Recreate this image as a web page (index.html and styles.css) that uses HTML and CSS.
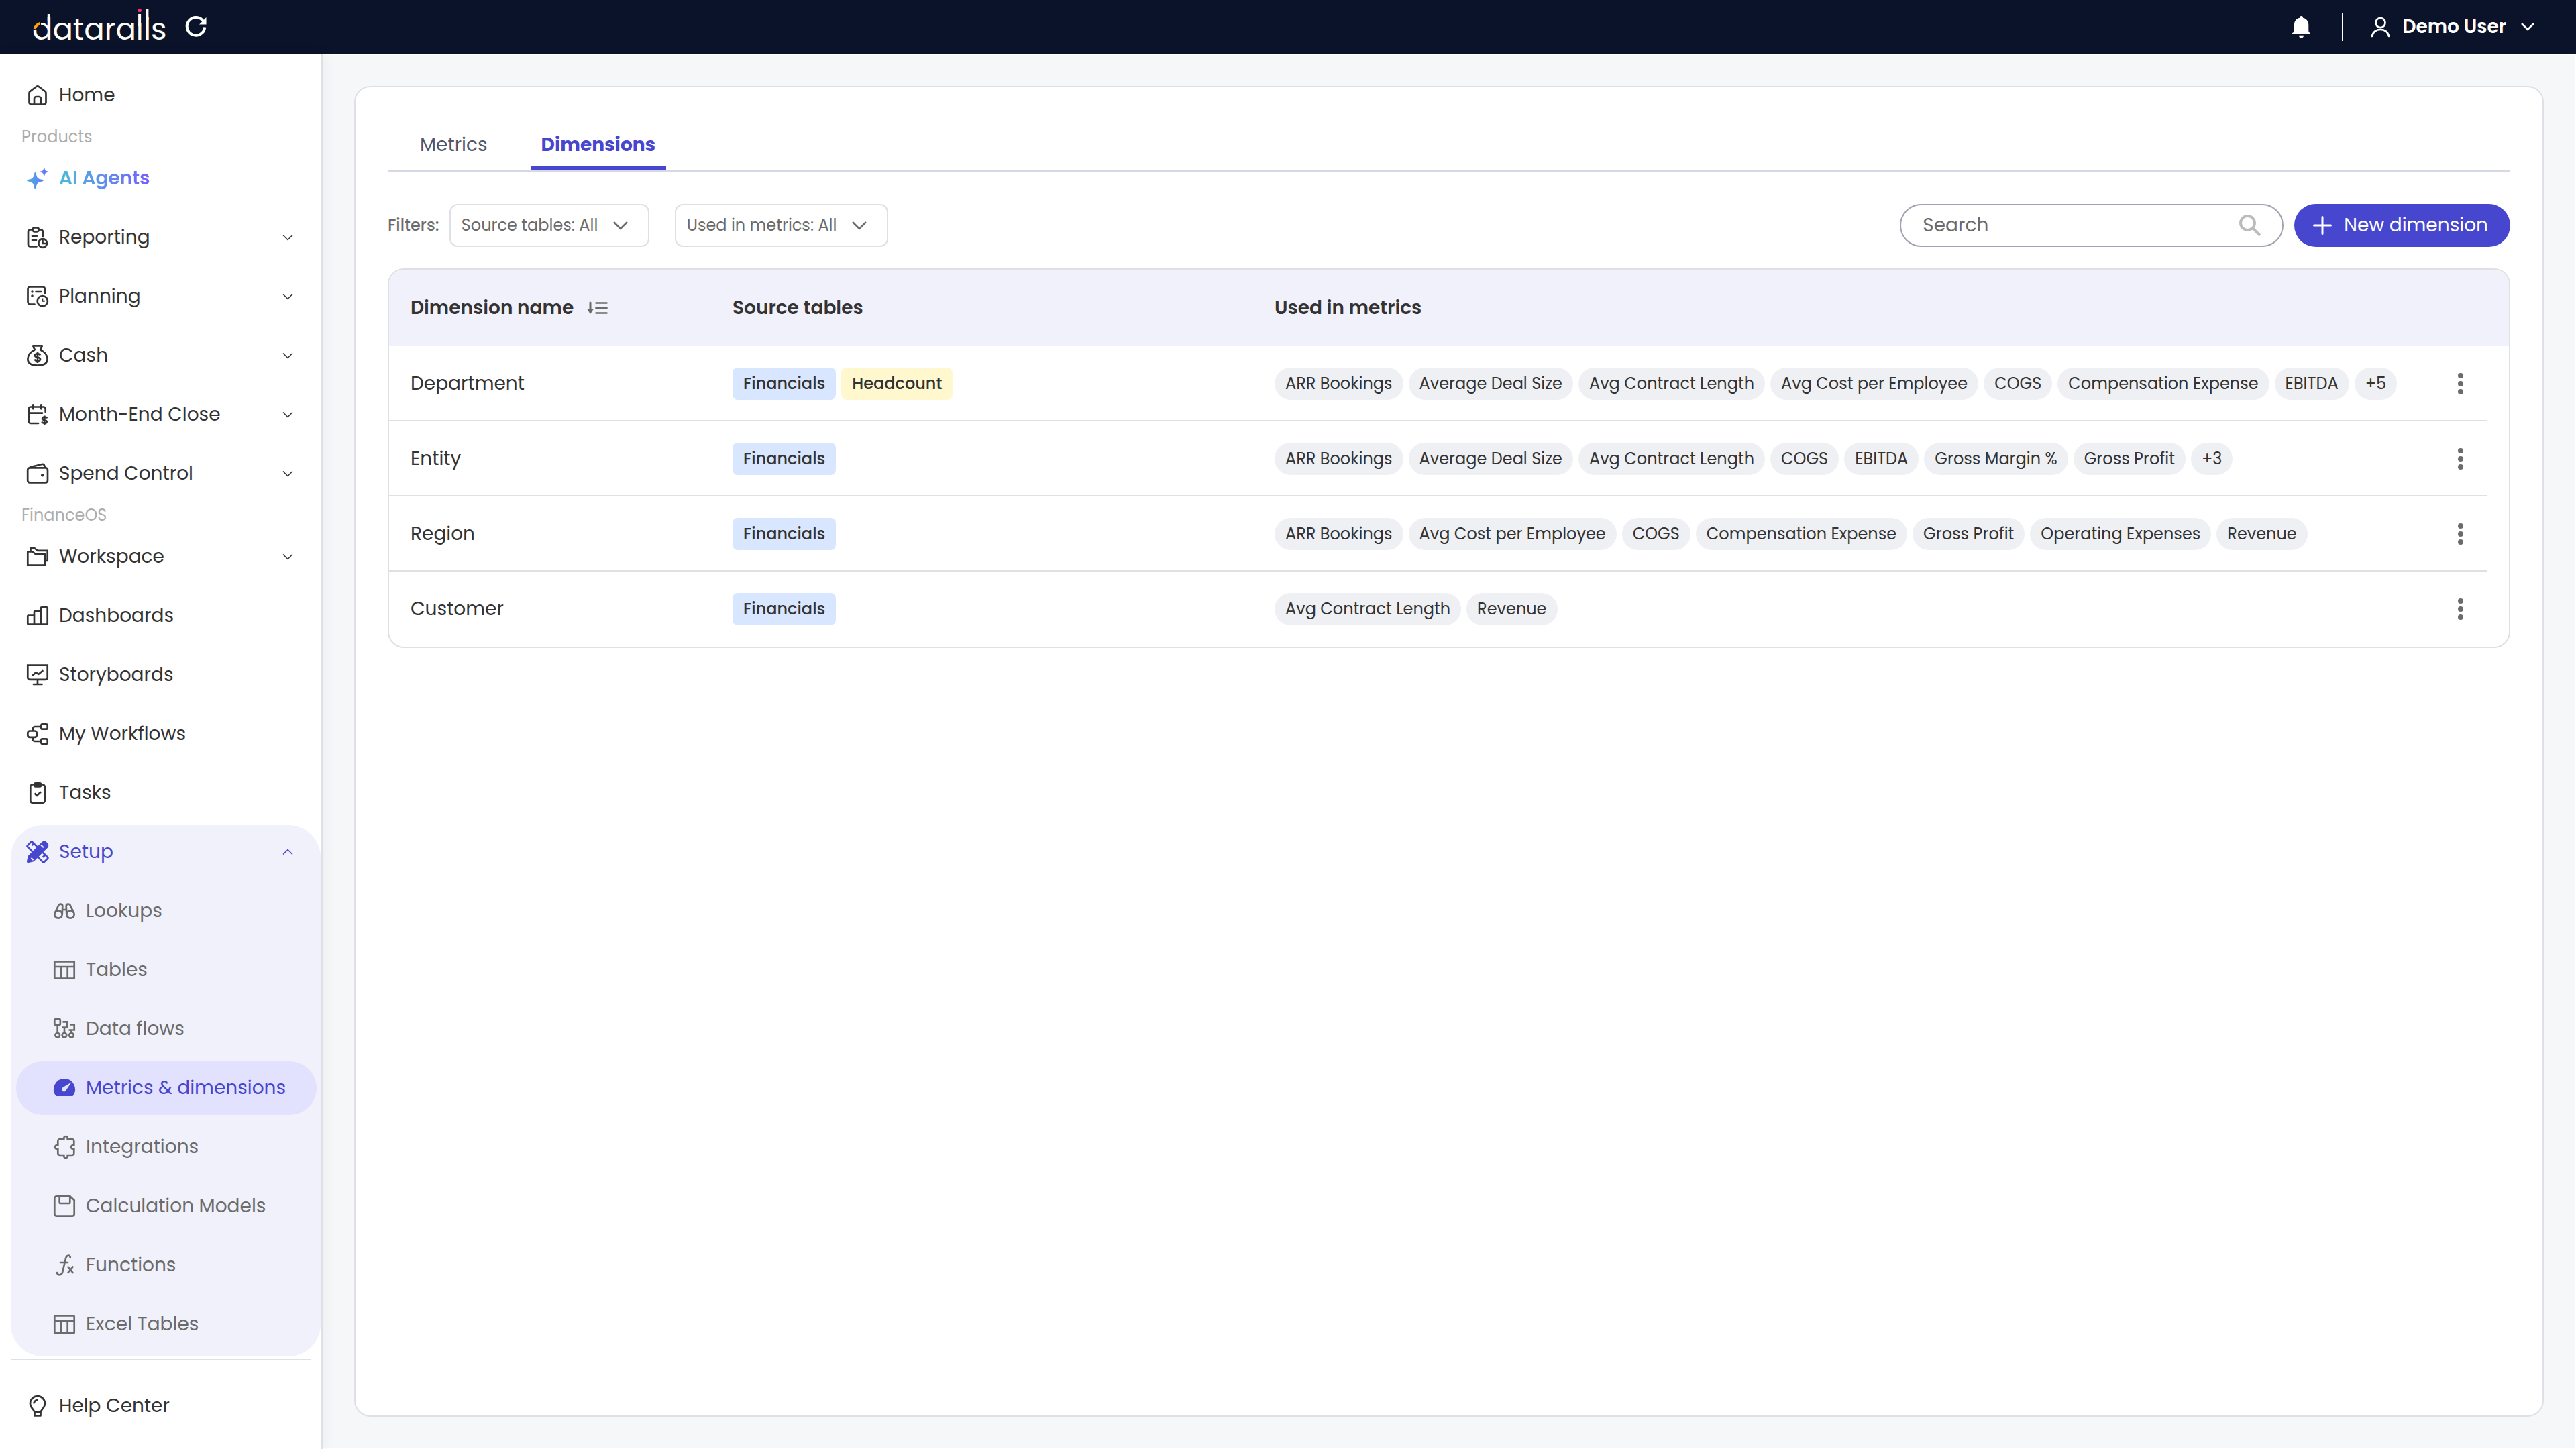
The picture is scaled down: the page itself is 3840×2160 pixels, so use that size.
FILE: index.html
```html
<!DOCTYPE html>
<html lang="en">

<head>
    <meta charset="UTF-8">
    <meta name="viewport" content="width=device-width, initial-scale=1.0">
    <title>Datarails - Metrics &amp; dimensions</title>
    <link rel="stylesheet" href="styles.css">
</head>

<body>
    <header class="topbar">
        <a class="logo" href="#" aria-label="datarails">
            <svg width="204" height="68" viewBox="0 -4 204 68">
                <text class="logo-text" x="0" y="49">datarails</text>
                <!-- orange start of the d, tall stems, pink dot -->
                <circle class="logo-gap" cx="6.500" cy="28" r="7" />
                <path class="logo-arc" d="M3.600 33a12 12 0 0 1 8-8" />
                <path class="logo-gap" d="M155 10h9.500v13H155z" />
                <path class="logo-stem" d="M24.800 11v10M160.100 11v18M171.400 4v16" />
                <circle class="logo-dot" cx="160.100" cy="5.500" r="2.800" />
            </svg>
        </a>
        <button class="icon-btn" aria-label="Refresh">
            <svg class="icon" viewBox="0 0 32 32"><path d="M27.500 8.500A13.300 13.300 0 1 0 29.300 16.500" stroke-width="4" /><path class="fill" d="M31.500 2v10.500H21z" /></svg>
        </button>
        <div class="topbar-right">
            <button class="icon-btn" aria-label="Notifications">
                <svg class="icon" viewBox="0 0 32 32"><path class="fill" d="M15.500 0a2.500 2.500 0 0 1 2.500 2.700c5 1 8.300 5 8.300 10V21c0 2 .5 3 2.400 4.300V27H2v-1.700C4.300 24 5 23 5 21v-8.300c0-5 3-9 8-10A2.500 2.500 0 0 1 15.500 0zM12 28.700h7a3.500 3.500 0 0 1-7 0z" /></svg>
            </button>
            <span class="divider"></span>
            <button class="user-btn">
                <svg class="icon" viewBox="0 0 32 32"><circle cx="15.500" cy="10" r="7" /><path d="M3 30c2-13.500 23-13.500 25 0" stroke-linecap="round" /></svg>
                Demo User
                <svg class="user-chevron" width="24" height="16" viewBox="0 0 24 16"><path d="M3 3l9 9 9-9" /></svg>
            </button>
        </div>
    </header>

    <div class="layout">
        <nav class="sidebar">
            <a class="nav-item" href="#">
                <svg class="icon" viewBox="0 0 32 32"><path d="M3.500 12.600c0-.9.4-1.700 1.100-2.300L14.200 3a3 3 0 0 1 3.600 0l9.600 7.300c.7.6 1.100 1.400 1.100 2.300V26.500a3 3 0 0 1-3 3h-19a3 3 0 0 1-3-3zM11 29v-8a3 3 0 0 1 3-3h4a3 3 0 0 1 3 3v8" /></svg>
                Home
            </a>
            <h2 class="nav-label">Products</h2>
            <a class="nav-item" href="#">
                <svg class="icon" viewBox="0 0 32 32">
                    <defs>
                        <linearGradient id="ai" gradientUnits="userSpaceOnUse" x1="0" y1="0" x2="32" y2="0">
                            <stop offset="0" stop-color="#50acdf" />
                            <stop offset="1" stop-color="#6772fa" />
                        </linearGradient>
                    </defs>
                    <path class="spark" d="M12.400 6.700q1 0 1.600 3.300c1 5 2.500 6.600 7.400 7.600q3.300.6 3.300 1.600t-3.300 1.600c-4.900 1-6.400 2.600-7.400 7.600q-.6 3.300-1.600 3.300t-1.600-3.300c-1-5-2.500-6.600-7.400-7.600q-3.300-.6-3.300-1.600t3.300-1.600c4.900-1 6.400-2.600 7.400-7.600q.6-3.300 1.600-3.300z" />
                    <path class="spark" d="M25.800 0q.6 0 .9 1.700c.5 2.300 1.300 3.100 3.600 3.600q1.700.3 1.700.9t-1.700.9c-2.300.5-3.100 1.300-3.600 3.600q-.3 1.700-.9 1.700t-.9-1.700c-.5-2.300-1.300-3.100-3.600-3.600q-1.700-.3-1.700-.9t1.700-.9c2.300-.5 3.100-1.300 3.600-3.600q.3-1.700.9-1.700z" />
                </svg>
                <span class="ai-text">AI Agents</span>
            </a>
            <a class="nav-item" href="#">
                <svg class="icon" viewBox="0 0 32 32"><path d="M8 4.500H5a3 3 0 0 0-3 3v19a3 3 0 0 0 3 3h9.500M18.500 4.500H21a3 3 0 0 1 3 3V14M8 13.700h7M8 20h6" stroke-linecap="round" /><rect x="8.500" y="1.300" width="9.500" height="6" rx="3" /><circle cx="23.700" cy="24.500" r="6.300" /><path d="M23.500 19v6h6" /></svg>
                Reporting
                <svg class="chevron" viewBox="0 0 16 10"><path d="M1 1.500l7 7 7-7" /></svg>
            </a>
            <a class="nav-item" href="#">
                <svg class="icon" viewBox="0 0 32 32"><path d="M27 11.500V5a3.500 3.500 0 0 0-3.500-3.500H5A3.500 3.500 0 0 0 1.500 5v19A3.500 3.500 0 0 0 5 27.500h6.500M13.500 9H21" stroke-linecap="round" /><circle class="fill" cx="8" cy="9" r="1.800" /><circle class="fill" cx="8" cy="15" r="1.800" /><circle cx="23.300" cy="22.700" r="7.700" /><path d="M23.300 18.500v4.300h3.500" stroke-width="2" /></svg>
                Planning
                <svg class="chevron" viewBox="0 0 16 10"><path d="M1 1.500l7 7 7-7" /></svg>
            </a>
            <a class="nav-item" href="#">
                <svg class="icon" viewBox="0 0 32 32"><path d="M12 7.500L9.500 3a1.200 1.200 0 0 1 1-1.700h11a1.200 1.200 0 0 1 1 1.700L20 7.500M12 7.500C6 9.500 1.400 15 1.400 21c0 7 5 9.600 14.600 9.600S30.600 28 30.600 21C30.600 15 26 9.500 20 7.500" /><path d="M20 15.500c-.5-1.500-2-2.200-4-2.200-2.400 0-4 1-4 2.600 0 3.600 8 1.600 8 5.400 0 1.700-1.600 2.600-4 2.600s-3.800-.8-4.200-2.500M16 10.500v16.500" /></svg>
                Cash
                <svg class="chevron" viewBox="0 0 16 10"><path d="M1 1.500l7 7 7-7" /></svg>
            </a>
            <a class="nav-item" href="#">
                <svg class="icon" viewBox="0 0 32 32"><path d="M27.700 12V7.500a3 3 0 0 0-3-3h-19a3 3 0 0 0-3 3V26a3 3 0 0 0 3 3H17M2.700 13.700H23M9.300 1.300v6M21.300 1.300v6" stroke-linecap="round" /><path d="M30 21.500c-.4-1.200-1.700-1.800-3.600-1.800-2 0-3.300.8-3.300 2.200 0 3.200 6.600 1.400 6.600 4.600 0 1.500-1.300 2.300-3.400 2.300s-3.400-.7-3.700-2.200M26.300 17.500v14" /></svg>
                Month-End Close
                <svg class="chevron" viewBox="0 0 16 10"><path d="M1 1.500l7 7 7-7" /></svg>
            </a>
            <a class="nav-item" href="#">
                <svg class="icon" viewBox="0 0 32 32"><rect x="1.200" y="7.300" width="29.800" height="22" rx="3" /><path d="M4 6.500L22.500 2a3 3 0 0 1 3.600 2l.9 3" /><circle class="fill" cx="23.300" cy="18.300" r="2.300" /></svg>
                Spend Control
                <svg class="chevron" viewBox="0 0 16 10"><path d="M1 1.500l7 7 7-7" /></svg>
            </a>
            <h2 class="nav-label">FinanceOS</h2>
            <a class="nav-item" href="#">
                <svg class="icon" viewBox="0 0 32 32" stroke-linejoin="round"><path d="M1.300 8.500h7.200l4.300 3.500H27v16.700H1.300zM5.500 8V3.300h6l4.200 3.500h15V22H27" /></svg>
                Workspace
                <svg class="chevron" viewBox="0 0 16 10"><path d="M1 1.500l7 7 7-7" /></svg>
            </a>
            <a class="nav-item" href="#">
                <svg class="icon" viewBox="0 0 32 32" stroke-linejoin="round"><path d="M11 28.700H2.300a1 1 0 0 1-1-1V16.500a1 1 0 0 1 1-1H11M11 28.700V10a1 1 0 0 1 1-1h9M21 28.700V4.300a1 1 0 0 1 1-1h7.700a1 1 0 0 1 1 1v23.400a1 1 0 0 1-1 1H11" /></svg>
                Dashboards
            </a>
            <a class="nav-item" href="#">
                <svg class="icon" viewBox="0 0 32 32"><path d="M1.300 1.600h29.400v18.200a3 3 0 0 1-3 3H4.300a3 3 0 0 1-3-3zM16 23v6" /><path d="M10 30h12.500M9 16.300l4.500-4 4 2.500L23.500 10" stroke-linecap="round" stroke-linejoin="round" /></svg>
                Storyboards
            </a>
            <a class="nav-item" href="#">
                <svg class="icon" viewBox="0 0 32 32"><rect x="1.300" y="11.500" width="13.500" height="9.300" rx="3" /><rect x="21.300" y="1.300" width="9.400" height="7.400" rx="2" /><rect x="21.300" y="23.300" width="9.400" height="7.400" rx="2" /><path d="M9 11V8a3 3 0 0 1 3-3h9M9 21v3a3 3 0 0 0 3 3h9" /></svg>
                My Workflows
            </a>
            <a class="nav-item" href="#">
                <svg class="icon" viewBox="0 0 32 32"><rect x="5.300" y="3.500" width="21.400" height="27.200" rx="3" /><rect class="fill" x="10" y="0" width="12.300" height="7.700" rx="3" /><path d="M11.500 16.500l3.500 3.300 6-5.500" /></svg>
                Tasks
            </a>

            <div class="nav-group">
                <a class="nav-item open" href="#">
                    <svg class="icon" viewBox="0 0 32 32">
                        <g transform="rotate(45 16 16)"><rect x="-1.500" y="11" width="35" height="10" rx="1.500" /><path d="M3 11v4M27 11v5" /></g>
                        <g transform="rotate(-45 16 16)"><path class="fill" d="M2 10h29a5 5 0 0 1 5 5v2a5 5 0 0 1-5 5H2l-6.500-4q-3-2 0-4z" /><path class="slit" d="M3 15.500v4.500M27 12v5.500" /></g>
                    </svg>
                    Setup
                    <svg class="chevron" viewBox="0 0 16 10"><path d="M1 8.500l7-7 7 7" /></svg>
                </a>
                <a class="nav-item sub" href="#">
                    <svg class="icon" viewBox="0 0 32 32"><circle cx="7" cy="21" r="5.700" /><circle cx="25" cy="21" r="5.700" /><path d="M2 18.500L7 8q1-2.300 3.300-2.300 3 0 3 3L12.700 21M30 18.500L25 8q-1-2.300-3.300-2.300-3 0-3 3l.6 12.300M13 14h6" /></svg>
                    Lookups
                </a>
                <a class="nav-item sub" href="#">
                    <svg class="icon" viewBox="0 0 32 32" stroke-linejoin="round"><path d="M1.300 3.300h29.400v25.400H1.300zM1.300 11h29.400M11.300 11v17.500M20.700 11v17.500" /></svg>
                    Tables
                </a>
                <a class="nav-item sub" href="#">
                    <svg class="icon" viewBox="0 0 32 32"><rect x="1.300" y="1.300" width="8.500" height="8.500" rx="1" /><circle cx="5.700" cy="25.300" r="3.300" /><circle cx="16" cy="25.300" r="3.300" /><circle cx="26.500" cy="25.300" r="3.300" /><path d="M5.700 10v12M13.500 5.300H20v8.400h-7.500M16 13.700V22M24 9.500h6.700v8H22.500M26.500 17.500V22" /></svg>
                    Data flows
                </a>
                <a class="nav-item sub active" href="#">
                    <svg class="icon" viewBox="0 0 32 32"><path class="fill" d="M16 2A16 16 0 0 0 3.500 28h25A16 16 0 0 0 16 2z" /><path class="needle" d="M26.700 7.200L18.800 18.800a3.400 3.400 0 1 1-4.500-4z" /></svg>
                    Metrics &amp; dimensions
                </a>
                <a class="nav-item sub" href="#">
                    <svg class="icon" viewBox="0 0 32 32"><path d="M6.300 7a3 3 0 0 1 3-3h6v-1.300a2.700 2.700 0 0 1 5.400 0V4h6.600a3 3 0 0 1 3 3v6h-1.300a3 3 0 0 0 0 6h1.300v6a3 3 0 0 1-3 3h-6.600v1.300a2.700 2.700 0 0 1-5.400 0V28h-6a3 3 0 0 1-3-3v-6H5a3 3 0 0 1 0-6h1.300z" /></svg>
                    Integrations
                </a>
                <a class="nav-item sub" href="#">
                    <svg class="icon" viewBox="0 0 32 32"><path d="M4.300 1.300h20.200l6.200 6v20.400a3 3 0 0 1-3 3H4.300a3 3 0 0 1-3-3V4.300a3 3 0 0 1 3-3zM8.700 1.500V11a1 1 0 0 0 1 1h13.600a1 1 0 0 0 1-1V1.500" /></svg>
                    Calculation Models
                </a>
                <a class="nav-item sub" href="#">
                    <svg class="icon" viewBox="0 0 32 32" stroke-linecap="round"><path d="M24.800 5c0-4.500-5.300-5-6.800 1l-4.500 19c-1.200 6.500-7.500 6.800-8.500 2M10 12h11M21.500 18.500l7 8.500M28.500 18.500l-7 8.500" /></svg>
                    Functions
                </a>
                <a class="nav-item sub" href="#">
                    <svg class="icon" viewBox="0 0 32 32" stroke-linejoin="round"><path d="M1.300 3.300h29.400v25.400H1.300zM1.300 11h29.400M11.300 11v17.500M20.700 11v17.500" /></svg>
                    Excel Tables
                </a>
            </div>

            <div class="nav-footer">
                <a class="nav-item" href="#">
                    <svg class="icon" viewBox="0 0 32 32"><path d="M11.500 25C10 20.500 5 18 5 12.200a11 11 0 0 1 22 0C27 18 22 20.500 20.500 25zM11.500 25v5.500h9V25M10.500 11.500a6 6 0 0 1 4.500-4.500" stroke-linejoin="round" stroke-linecap="round" /></svg>
                    Help Center
                </a>
            </div>
        </nav>

        <main class="main">
            <section class="card">
                <div class="tabs" role="tablist">
                    <button class="tab" role="tab" aria-selected="false">Metrics</button>
                    <button class="tab selected" role="tab" aria-selected="true">Dimensions</button>
                </div>

                <div class="toolbar">
                    <span class="filters-label">Filters:</span>
                    <div class="filter">
                        <select class="filter-select source" aria-label="Source tables">
                            <option>Source tables: All</option>
                        </select>
                        <svg class="filter-chevron" viewBox="0 0 24 16"><path d="M2 3l10 10 10-10" /></svg>
                    </div>
                    <div class="filter">
                        <select class="filter-select used" aria-label="Used in metrics">
                            <option>Used in metrics: All</option>
                        </select>
                        <svg class="filter-chevron" viewBox="0 0 24 16"><path d="M2 3l10 10 10-10" /></svg>
                    </div>
                    <div class="toolbar-right">
                        <div class="search">
                            <input class="search-input" type="text" placeholder="Search" aria-label="Search">
                            <svg class="search-icon" viewBox="0 0 32 32"><circle cx="12.500" cy="12.500" r="10.500" /><path d="M20.500 20.500L31 31" /></svg>
                        </div>
                        <button class="new-btn">
                            <svg width="28" height="28" viewBox="0 0 28 28"><path d="M14 1.500v25M1.500 14h25" /></svg>
                            New dimension
                        </button>
                    </div>
                </div>

                <div class="table-wrap">
                    <table class="table">
                        <thead>
                            <tr>
                                <th class="col-name">
                                    <span class="sortable">Dimension name
                                        <svg width="32" height="20" viewBox="0 0 32 20"><path d="M5 2v13" stroke-width="3" /><path class="sort-head" d="M.5 12h9L5 19z" /><path d="M13.500 2.500h16M13.500 10h16M13.500 17.500h16" stroke-width="2.700" /></svg>
                                    </span>
                                </th>
                                <th class="col-source">Source tables</th>
                                <th>Used in metrics</th>
                                <th class="col-menu"></th>
                            </tr>
                        </thead>
                        <tbody>
                            <tr>
                                <td>Department</td>
                                <td><div class="tags"><span class="tag blue">Financials</span><span class="tag yellow">Headcount</span></div></td>
                                <td><div class="tags">
                                    <span class="chip">ARR Bookings</span>
                                    <span class="chip">Average Deal Size</span>
                                    <span class="chip">Avg Contract Length</span>
                                    <span class="chip">Avg Cost per Employee</span>
                                    <span class="chip">COGS</span>
                                    <span class="chip">Compensation Expense</span>
                                    <span class="chip">EBITDA</span>
                                    <span class="chip">+5</span>
                                </div></td>
                                <td class="col-menu"><button class="menu-btn" aria-label="Department actions"><svg width="12" height="36" viewBox="0 0 12 36"><circle cx="6" cy="6" r="4" /><circle cx="6" cy="18" r="4" /><circle cx="6" cy="30" r="4" /></svg></button></td>
                            </tr>
                            <tr>
                                <td>Entity</td>
                                <td><div class="tags"><span class="tag blue">Financials</span></div></td>
                                <td><div class="tags">
                                    <span class="chip">ARR Bookings</span>
                                    <span class="chip">Average Deal Size</span>
                                    <span class="chip">Avg Contract Length</span>
                                    <span class="chip">COGS</span>
                                    <span class="chip">EBITDA</span>
                                    <span class="chip">Gross Margin %</span>
                                    <span class="chip">Gross Profit</span>
                                    <span class="chip">+3</span>
                                </div></td>
                                <td class="col-menu"><button class="menu-btn" aria-label="Entity actions"><svg width="12" height="36" viewBox="0 0 12 36"><circle cx="6" cy="6" r="4" /><circle cx="6" cy="18" r="4" /><circle cx="6" cy="30" r="4" /></svg></button></td>
                            </tr>
                            <tr>
                                <td>Region</td>
                                <td><div class="tags"><span class="tag blue">Financials</span></div></td>
                                <td><div class="tags">
                                    <span class="chip">ARR Bookings</span>
                                    <span class="chip">Avg Cost per Employee</span>
                                    <span class="chip">COGS</span>
                                    <span class="chip">Compensation Expense</span>
                                    <span class="chip">Gross Profit</span>
                                    <span class="chip">Operating Expenses</span>
                                    <span class="chip">Revenue</span>
                                </div></td>
                                <td class="col-menu"><button class="menu-btn" aria-label="Region actions"><svg width="12" height="36" viewBox="0 0 12 36"><circle cx="6" cy="6" r="4" /><circle cx="6" cy="18" r="4" /><circle cx="6" cy="30" r="4" /></svg></button></td>
                            </tr>
                            <tr>
                                <td>Customer</td>
                                <td><div class="tags"><span class="tag blue">Financials</span></div></td>
                                <td><div class="tags">
                                    <span class="chip">Avg Contract Length</span>
                                    <span class="chip">Revenue</span>
                                </div></td>
                                <td class="col-menu"><button class="menu-btn" aria-label="Customer actions"><svg width="12" height="36" viewBox="0 0 12 36"><circle cx="6" cy="6" r="4" /><circle cx="6" cy="18" r="4" /><circle cx="6" cy="30" r="4" /></svg></button></td>
                            </tr>
                        </tbody>
                    </table>
                </div>
            </section>
        </main>
    </div>
</body>

</html>
```
FILE: styles.css
```css
* {
    box-sizing: border-box;
}

body {
    margin: 0;
    min-height: 100vh;
    display: flex;
    flex-direction: column;
    font-family: Poppins, Inter, sans-serif;
    font-size: 28px;
    line-height: 42px;
    color: #333;
    background: #fff;
}

button,
input,
select {
    font: inherit;
    color: inherit;
}

button {
    border: 0;
    padding: 0;
    background: none;
    cursor: pointer;
}

a {
    color: inherit;
    text-decoration: none;
}

svg {
    display: block;
    flex: none;
    fill: none;
    stroke: currentColor;
}

.icon {
    width: 32px;
    height: 32px;
    stroke-width: 2.7;
    overflow: visible;
}

.fill {
    fill: currentColor;
    stroke: none;
}

/* Top bar */
.topbar {
    height: 80px;
    display: flex;
    align-items: center;
    gap: 24px;
    padding: 0 60px 0 48px;
    background: #0b132a;
    color: #fff;
}

.logo-text {
    font-size: 45px;
    font-weight: 400;
    fill: #fdfcf5;
    stroke: none;
}

.logo-gap {
    fill: #0b132a;
    stroke: none;
}

.logo-stem {
    stroke: #fdfcf5;
    stroke-width: 4;
}

.logo-arc {
    stroke: #ff9f0a;
    stroke-width: 4;
}

.logo-dot {
    fill: #ff2d6b;
    stroke: none;
}

.topbar-right {
    margin-left: auto;
    display: flex;
    align-items: center;
}

.divider {
    width: 2px;
    height: 42px;
    margin: 0 40px 0 44px;
    background: #fff;
}

.user-btn {
    display: flex;
    align-items: center;
    gap: 16px;
    font-weight: 600;
}

.user-chevron {
    margin-left: 4px;
    stroke-width: 2.5;
}

/* Sidebar */
.layout {
    flex: 1;
    display: flex;
}

.sidebar {
    flex: none;
    width: 482px;
    padding-top: 22px;
    border-right: 4px solid #dfe0e6;
    box-shadow: 0 0 24px rgba(0, 0, 0, 0.05);
    z-index: 1;
}

.nav-item {
    height: 80px;
    display: flex;
    align-items: center;
    gap: 16px;
    padding: 0 41px 0 40px;
}

.nav-item + .nav-item,
.nav-group {
    margin-top: 8px;
}

.nav-label {
    margin: 0;
    padding-left: 32px;
    font-size: 24px;
    font-weight: 400;
    line-height: 44px;
    color: #adadad;
}

.ai-text {
    font-weight: 600;
    background: linear-gradient(90deg, #4cbbd9, #7560ff);
    background-clip: text;
    color: transparent;
}

.spark {
    fill: url(#ai);
    stroke: none;
}

.chevron {
    width: 16px;
    height: 10px;
    margin-left: auto;
    stroke-width: 1.5;
    overflow: visible;
}

.nav-group {
    margin-left: 16px;
    padding-bottom: 8px;
    border-radius: 48px;
    background: #f1f1fb;
}

.nav-item.open {
    padding-left: 24px;
    color: #4646ce;
}

.slit {
    stroke: #f1f1fb;
    stroke-width: 2;
}

.nav-item.sub {
    margin-left: 8px;
    margin-right: 6px;
    padding: 0 0 0 56px;
    border-radius: 40px;
    color: #6b6b6b;
}

.nav-item.active {
    background: #e2e1fe;
    color: #4646ce;
}

.needle {
    fill: #e2e1fe;
    stroke: none;
}

.nav-footer {
    margin: 4px 14px 0 16px;
    padding: 28px 0 24px;
    border-top: 2px solid #dfe0e6;
}

.nav-footer .nav-item {
    padding-left: 24px;
}

/* Content */
.main {
    flex: 1;
    min-width: 0;
    display: flex;
    padding: 46px;
    background: #f6f7f9;
    border: 2px solid #fff;
    border-left: 0;
}

.card {
    flex: 1;
    min-width: 0;
    padding: 48px;
    background: #fff;
    border: 2px solid #dfe0e6;
    border-radius: 24px;
}

.tabs {
    display: flex;
    gap: 48px;
    padding-left: 32px;
    border-bottom: 2px solid #d5d9e4;
}

.tab {
    height: 76px;
    padding: 0 16px;
    color: #50566b;
}

.tab.selected {
    font-weight: 700;
    color: #4646ce;
    box-shadow: inset 0 -6px #4646ce;
}

.toolbar {
    margin-top: 48px;
    display: flex;
    align-items: center;
    font-size: 24px;
    color: #6b6b6b;
}

.filters-label {
    margin-right: 15px;
    font-weight: 500;
}

.filter {
    display: grid;
    align-items: center;
    margin-right: 38px;
}

.filter-select,
.filter-chevron,
.search-input,
.search-icon {
    grid-area: 1 / 1;
}

.filter-select {
    appearance: none;
    height: 64px;
    padding: 0 16px;
    border: 2px solid #dfe0e6;
    border-radius: 12px;
    background: #fff;
}

.source {
    width: 298px;
}

.used {
    width: 318px;
}

.filter-chevron {
    width: 24px;
    height: 16px;
    margin-right: 31px;
    justify-self: end;
    stroke-width: 2.5;
    pointer-events: none;
}

.toolbar-right {
    margin-left: auto;
    display: flex;
    gap: 16px;
    font-size: 28px;
}

.search {
    display: grid;
    align-items: center;
}

.search-input {
    width: 572px;
    height: 64px;
    padding: 0 80px 0 32px;
    border: 2px solid #9fa2af;
    border-radius: 32px;
    background: #fff;
}

.search-input::placeholder {
    color: #6b6b6b;
    opacity: 1;
}

.search-icon {
    width: 32px;
    height: 32px;
    margin-right: 34px;
    justify-self: end;
    stroke: #bcbcbc;
    stroke-width: 4;
}

.new-btn {
    height: 64px;
    display: flex;
    align-items: center;
    gap: 18px;
    padding: 0 33px 0 28px;
    border-radius: 32px;
    background: #4646ce;
    color: #fff;
}

.new-btn svg {
    stroke-width: 3;
    stroke-linecap: round;
}

/* Table */
.table-wrap {
    margin-top: 32px;
    border: 2px solid #dfe0e4;
    border-radius: 24px;
    overflow: hidden;
}

.table {
    width: 100%;
    border-collapse: collapse;
}

.table th,
.table td {
    padding: 0 0 0 32px;
    text-align: left;
}

.table th {
    height: 114px;
    font-weight: 600;
    background: #f1f1fb;
}

.table td {
    height: 112px;
}

.table tbody tr:not(:last-child) {
    background: linear-gradient(#dfe0e4, #dfe0e4) left bottom / calc(100% - 32px) 2px no-repeat;
}

.col-name {
    width: 480px;
}

.col-source {
    width: 808px;
}

.table .col-menu {
    width: 144px;
    padding: 0;
    text-align: center;
}

.sortable {
    display: flex;
    align-items: center;
    gap: 20px;
}

.sortable svg {
    stroke: #6b6b6b;
    stroke-linecap: round;
}

.sortable .sort-head {
    fill: #6b6b6b;
    stroke: none;
}

.tags {
    display: flex;
    flex-wrap: wrap;
    gap: 8px;
    font-size: 24px;
    line-height: 48px;
}

.tag {
    padding: 0 16px;
    border-radius: 8px;
    font-weight: 500;
}

.blue {
    background: #d8e6ff;
}

.yellow {
    background: #fff8cf;
}

.chip {
    padding: 0 16px;
    border-radius: 24px;
    background: #eff0f4;
}

.menu-btn {
    padding: 8px 16px;
    vertical-align: middle;
}

.menu-btn svg {
    fill: #6b6b6b;
    stroke: none;
}
```
